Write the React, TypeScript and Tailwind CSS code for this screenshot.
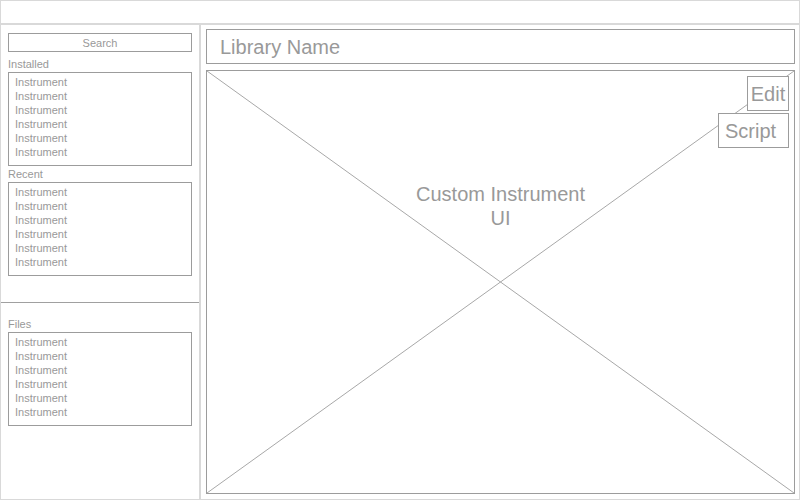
import React from "react";

const items = ["Instrument", "Instrument", "Instrument", "Instrument", "Instrument", "Instrument"];

function ListBox() {
  return (
    <div className="h-[94px] border border-[#9c9c9c] pt-[2px] pl-[6px]">
      {items.map((t, i) => (
        <div key={i} className="text-[11px] leading-[14px] text-[#999999]">
          {t}
        </div>
      ))}
    </div>
  );
}

function Label({ text, className = "" }: { text: string; className?: string }) {
  return (
    <div className={`h-[15px] text-[11px] leading-[14px] text-[#999999] ${className}`}>{text}</div>
  );
}

export default function App() {
  return (
    <div className="w-[800px] h-[500px] border border-[#d9d9d9] flex flex-col bg-white font-['Liberation_Sans',Arial,sans-serif]">
      <div className="h-[24px] shrink-0 border-b-2 border-[#d9d9d9]" />
      <div className="flex-1 flex min-h-0">
        <div className="w-[200px] shrink-0 border-r-2 border-[#d9d9d9] flex flex-col">
          <div className="px-[7px] pt-[8px]">
            <div className="h-[19px] border border-[#9c9c9c] pt-px text-[11px] leading-[17px] text-center text-[#999999]">
              Search
            </div>
            <Label text="Installed" className="mt-[5px]" />
            <ListBox />
            <Label text="Recent" className="mt-[1px]" />
            <ListBox />
          </div>
          <div className="mt-[26px] h-px bg-[#a0a0a0]" />
          <div className="px-[7px] pt-[14px]">
            <Label text="Files" />
            <ListBox />
          </div>
        </div>
        <div className="flex-1 flex flex-col pl-[5px] pr-[4px] pt-[4px] pb-[5px]">
          <div className="h-[35px] shrink-0 border border-[#9c9c9c] flex items-center pl-[13px] text-[20px] text-[#999999]">
            Library Name
          </div>
          <div className="mt-[6px] flex-1 relative border border-[#9c9c9c]">
            <svg className="absolute inset-0" width="100%" height="100%">
              <line x1="0" y1="0" x2="100%" y2="100%" stroke="#a8a8a8" strokeWidth="1" />
              <line x1="0" y1="100%" x2="100%" y2="0" stroke="#a8a8a8" strokeWidth="1" />
            </svg>
            <div className="relative pt-[111px] text-center text-[20px] leading-[24px] text-[#999999]">
              Custom Instrument
              <br />
              UI
            </div>
            <div className="absolute top-[5px] right-[5px] flex flex-col items-end gap-[2px]">
              <div className="w-[42px] h-[35px] border border-[#9c9c9c] bg-white flex items-center justify-center text-[20px] text-[#999999]">
                Edit
              </div>
              <div className="w-[71px] h-[35px] border border-[#9c9c9c] bg-white flex items-center pl-[6px] text-[20px] text-[#999999]">
                Script
              </div>
            </div>
          </div>
        </div>
      </div>
    </div>
  );
}
